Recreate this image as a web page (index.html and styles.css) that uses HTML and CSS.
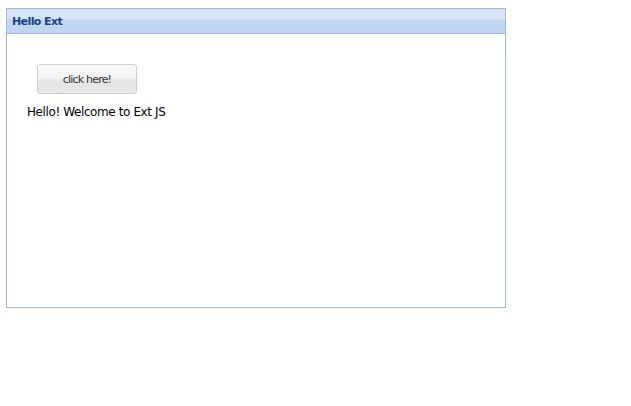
FILE: index.html
```html
<!DOCTYPE html>
<html lang="en">
<head>
  <meta charset="UTF-8">
  <title>Hello Ext</title>
  <link rel="stylesheet" href="styles.css">
</head>
<body>

<div class="panel">
  <div class="panel-header">Hello Ext</div>
  <div class="panel-body">
    <button class="btn">click here!</button>
    <div class="msg">Hello! Welcome to Ext JS</div>
  </div>
</div>

</body>
</html>
```

FILE: styles.css
```css
body { margin: 8px 6px; font-family: Tahoma, "DejaVu Sans", "Liberation Sans", sans-serif; font-size: 12px; }
.panel { width: 498px; border: 1px solid #99bbe8; }
.panel-header {
  height: 24px; line-height: 25px; padding-left: 5px;
  border-bottom: 1px solid #99bbe8;
  background: linear-gradient(to bottom, #dae6f6 0, #d5e3f5 10px, #c2d7f2 11px, #c0d5f1 100%);
  color: #15428b; font-weight: bold; font-size: 11px; letter-spacing: -0.6px;
}
.panel-body { box-sizing: border-box; height: 273px; padding: 30px 20px 0 20px; }
.btn {
  display: block; margin-left: 10px; width: 100px; height: 30px;
  border: 1px solid #cfcfcf; border-radius: 3px;
  background: linear-gradient(to bottom, #fbfbfb 0, #f2f2f2 14px, #e4e4e4 15px, #e9e9e9 100%);
  font-family: inherit; font-size: 11px; letter-spacing: -0.8px; color: #333; padding: 0;
}
.msg { margin-top: 11px; color: #000; letter-spacing: -0.4px; }
```
